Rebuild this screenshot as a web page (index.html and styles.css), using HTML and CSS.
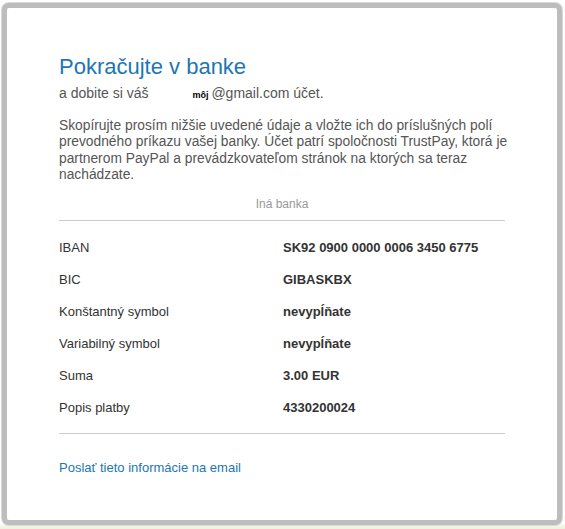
FILE: index.html
```html
<!DOCTYPE html>
<html lang="sk">
<head>
<meta charset="utf-8">
<title>Pokračujte v banke</title>
<link rel="stylesheet" href="styles.css">
</head>
<body>
<div class="frame">
  <div class="content">
    <h1 class="title">Pokračujte v banke</h1>
    <p class="subtitle">a dobite si váš <span class="gap"></span><span class="moj">môj</span>@gmail.com účet.</p>
    <p class="intro">Skopírujte prosím nižšie uvedené údaje a vložte ich do príslušných polí prevodného príkazu vašej banky. Účet patrí spoločnosti TrustPay, ktorá je partnerom PayPal a prevádzkovateľom stránok na ktorých sa teraz nachádzate.</p>
    <div class="bank">Iná banka</div>
    <div class="details">
      <div class="row"><span class="label">IBAN</span><span class="value">SK92 0900 0000 0006 3450 6775</span></div>
      <div class="row"><span class="label">BIC</span><span class="value">GIBASKBX</span></div>
      <div class="row"><span class="label">Konštantný symbol</span><span class="value">nevypĺňate</span></div>
      <div class="row"><span class="label">Variabilný symbol</span><span class="value">nevypĺňate</span></div>
      <div class="row"><span class="label">Suma</span><span class="value">3.00 EUR</span></div>
      <div class="row"><span class="label">Popis platby</span><span class="value">4330200024</span></div>
    </div>
    <a class="mail" href="#">Poslať tieto informácie na email</a>
  </div>
</div>
</body>
</html>
```
FILE: styles.css
```css
html, body {
  margin: 0;
  padding: 0;
  background: #ffffff;
}
body {
  width: 565px;
  height: 529px;
  overflow: hidden;
  font-family: "Liberation Sans", Arial, sans-serif;
  background: linear-gradient(to bottom, #ffffff 0, #ffffff 523px, #f3f5e6 526px, #eef2dc 529px);
}
.frame {
  box-sizing: border-box;
  margin: 3px 0 0 2px;
  width: 560px;
  height: 522px;
  border: 5px solid #bdbdbd;
  border-radius: 7px;
  box-shadow: 0 0 0 1px #d8d8d8;
  background: #ffffff;
}
.content {
  padding: 46px 52px 0 52px;
  width: 446px;
}
.title {
  margin: 0;
  font-size: 22px;
  line-height: 26px;
  font-weight: normal;
  color: #1d76b3;
}
.subtitle {
  margin: 5px 0 0;
  font-size: 14px;
  line-height: 17px;
  color: #555555;
}
.gap {
  display: inline-block;
  width: 40px;
}
.moj {
  font-size: 9px;
  font-weight: bold;
  color: #000000;
  margin-right: 3px;
}
.intro {
  margin: 14px 0 0;
  font-size: 13.8px;
  line-height: 16.4px;
  color: #555555;
  width: 456px;
}
.bank {
  margin-top: 12px;
  text-align: center;
  font-size: 12px;
  line-height: 16px;
  color: #999999;
}
.details {
  margin-top: 8.5px;
  border-top: 1px solid #cccccc;
  border-bottom: 1px solid #cccccc;
  padding: 10px 0 10px;
}
.row {
  display: grid;
  grid-template-columns: 224px 1fr;
  height: 32px;
  align-items: center;
  font-size: 13px;
  color: #333333;
}
.value {
  font-weight: bold;
}
.mail {
  display: block;
  margin-top: 26px;
  font-size: 13px;
  line-height: 16px;
  color: #1d76b3;
  text-decoration: none;
}
```
